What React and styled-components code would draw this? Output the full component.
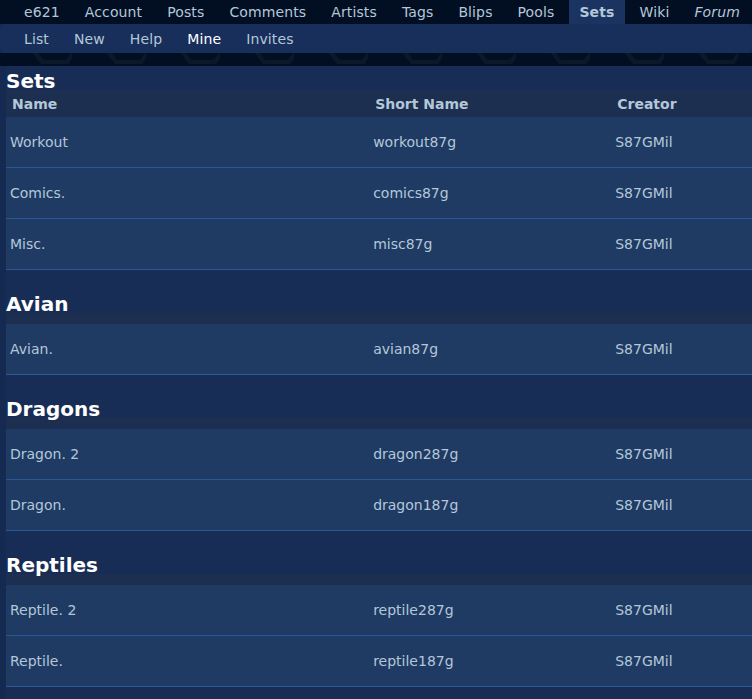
import React from "react";
import styled, { createGlobalStyle } from "styled-components";

const Global = createGlobalStyle`
  html, body { margin: 0; padding: 0; overflow: hidden; }
  body {
    background: #142a50;
    font-family: "DejaVu Sans", Verdana, sans-serif;
    color: #b4c7d9;
  }
`;

const TopNav = styled.nav`
  display: flex;
  height: 24px;
  background: #020f23;
  padding-left: 14px;
  gap: 5px;
  overflow: hidden;
`;

const NavLink = styled.a`
  display: flex;
  align-items: center;
  padding: 0 10px;
  font-size: 14px;
  letter-spacing: 0.12px;
  color: #b4c7d9;
  text-decoration: none;
  white-space: nowrap;
  font-weight: ${(p) => (p.$active ? "bold" : "normal")};
  font-style: ${(p) => (p.$italic ? "italic" : "normal")};
  background: ${(p) => (p.$active ? "#1a3360" : "transparent")};
`;

const SubNav = styled.nav`
  display: flex;
  height: 29px;
  background: #172f5a;
  border-radius: 6px;
  padding-left: 14px;
  gap: 5px;
`;

const SubLink = styled(NavLink)`
  color: ${(p) => (p.$current ? "#ffffff" : "#b4c7d9")};
  font-weight: normal;
`;

const Strip = styled.div`
  height: 13px;
  background: #020f23;
  overflow: hidden;
  svg { display: block; }
`;

const Page = styled.main`
  padding-left: 6px;
  height: calc(100vh - 66px);
  overflow: hidden;
`;

const Section = styled.section`
  background: #172d56;
  height: 100%;
`;

const Heading = styled.h2`
  margin: 0;
  padding-top: ${(p) => (p.$first ? "6px" : "25px")};
  line-height: 18px;
  font-size: 20px;
  font-weight: bold;
  color: #ffffff;
`;

const Table = styled.table`
  width: 807px;
  border-collapse: collapse;
  table-layout: fixed;
  font-size: 14px;
`;

const Head = styled.thead`
  background: #1c2f50;
`;

const Th = styled.th`
  height: ${(p) => (p.$empty ? "11px" : "27px")};
  padding: 0 0 0 6px;
  text-align: left;
  font-weight: bold;
  color: #b4c7d9;
  vertical-align: middle;
`;

const Row = styled.tr`
  background: #1f3b64;
  border-bottom: 1px solid #2a569a;
`;

const Td = styled.td`
  height: 50px;
  padding: 0 0 0 4px;
  vertical-align: middle;
  color: #b4c7d9;
  white-space: nowrap;
`;

const groups = [
  {
    title: "Sets",
    rows: [
      ["Workout", "workout87g"],
      ["Comics.", "comics87g"],
      ["Misc.", "misc87g"],
    ],
  },
  { title: "Avian", rows: [["Avian.", "avian87g"]] },
  {
    title: "Dragons",
    rows: [
      ["Dragon. 2", "dragon287g"],
      ["Dragon.", "dragon187g"],
    ],
  },
  {
    title: "Reptiles",
    rows: [
      ["Reptile. 2", "reptile287g"],
      ["Reptile.", "reptile187g"],
    ],
  },
];

function HexStrip() {
  return (
    <svg width="100%" height="13" aria-hidden="true">
      <defs>
        <pattern id="hex" width="74" height="13" patternUnits="userSpaceOnUse" x="-2">
          <path
            d="M36 -2 L44 9 L69 9 L77 -2"
            fill="none"
            stroke="#0b1829"
            strokeWidth="4"
          />
        </pattern>
      </defs>
      <rect width="100%" height="13" fill="url(#hex)" />
    </svg>
  );
}

export default function App() {
  const top = ["e621", "Account", "Posts", "Comments", "Artists", "Tags", "Blips", "Pools"];
  const sub = ["List", "New", "Help", "Mine", "Invites"];
  return (
    <>
      <Global />
      <TopNav>
        {top.map((t) => (
          <NavLink key={t}>{t}</NavLink>
        ))}
        <NavLink $active>Sets</NavLink>
        <NavLink>Wiki</NavLink>
        <NavLink $italic>Forum</NavLink>
      </TopNav>
      <SubNav>
        {sub.map((s) => (
          <SubLink key={s} $current={s === "Mine"}>
            {s}
          </SubLink>
        ))}
      </SubNav>
      <Strip>
        <HexStrip />
      </Strip>
      <Page>
        <Section>
          {groups.map((g, i) => (
            <div key={g.title}>
              <Heading $first={i === 0}>{g.title}</Heading>
              <Table>
                <colgroup>
                  <col style={{ width: "45%" }} />
                  <col style={{ width: "30%" }} />
                  <col style={{ width: "25%" }} />
                </colgroup>
                <Head>
                  <tr>
                    {i === 0 ? (
                      <>
                        <Th>Name</Th>
                        <Th>Short Name</Th>
                        <Th>Creator</Th>
                      </>
                    ) : (
                      <>
                        <Th $empty />
                        <Th $empty />
                        <Th $empty />
                      </>
                    )}
                  </tr>
                </Head>
                <tbody>
                  {g.rows.map(([name, short]) => (
                    <Row key={short}>
                      <Td>{name}</Td>
                      <Td>{short}</Td>
                      <Td>S87GMil</Td>
                    </Row>
                  ))}
                </tbody>
              </Table>
            </div>
          ))}
        </Section>
      </Page>
    </>
  );
}
